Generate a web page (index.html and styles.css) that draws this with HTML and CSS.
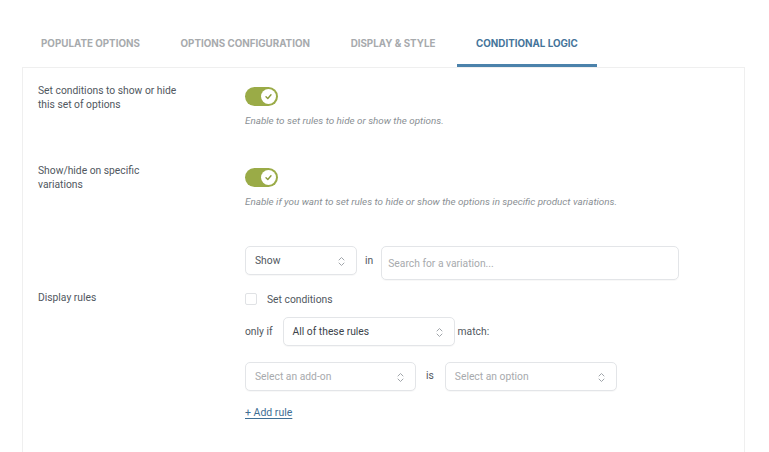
FILE: index.html
```html
<!DOCTYPE html>
<html lang="en">
<head>
<meta charset="utf-8">
<title>Conditional Logic</title>
<link rel="stylesheet" href="styles.css">
</head>
<body>
<nav class="tabs">
  <a class="tab">POPULATE OPTIONS</a>
  <a class="tab">OPTIONS CONFIGURATION</a>
  <a class="tab">DISPLAY &amp; STYLE</a>
  <a class="tab active">CONDITIONAL LOGIC</a>
</nav>
<div class="panel">
  <div class="row row-first">
    <div class="label">Set conditions to show or hide<br>this set of options</div>
    <div class="control">
      <span class="toggle"><span class="knob"><svg width="15" height="15" viewBox="0 0 15 15"><path d="M5 7.8 L6.8 9.5 L10 5.8" fill="none" stroke="#8a9a3c" stroke-width="1.4" stroke-linecap="round" stroke-linejoin="round"/></svg></span></span>
      <p class="desc">Enable to set rules to hide or show the options.</p>
    </div>
  </div>
  <div class="row row-second">
    <div class="label">Show/hide on specific<br>variations</div>
    <div class="control">
      <span class="toggle"><span class="knob"><svg width="15" height="15" viewBox="0 0 15 15"><path d="M5 7.8 L6.8 9.5 L10 5.8" fill="none" stroke="#8a9a3c" stroke-width="1.4" stroke-linecap="round" stroke-linejoin="round"/></svg></span></span>
      <p class="desc">Enable if you want to set rules to hide or show the options in specific product variations.</p>
    </div>
  </div>
  <div class="row row-rules">
    <div class="label label-rules">Display rules</div>
    <div class="control">
      <div class="line line-show">
        <div class="select select-show"><span class="val">Show</span><svg class="chev" width="7" height="11" viewBox="0 0 7 11"><path d="M1 4 L3.5 1.5 L6 4 M1 7 L3.5 9.5 L6 7" fill="none" stroke="#a0a5aa" stroke-width="1" stroke-linecap="round" stroke-linejoin="round"/></svg></div>
        <span class="word word-in">in</span>
        <div class="input"><span class="ph">Search for a variation...</span></div>
      </div>
      <div class="line line-check">
        <span class="checkbox"></span>
        <span class="check-label">Set conditions</span>
      </div>
      <div class="line line-onlyif">
        <span class="word word-only">only if</span>
        <div class="select select-all"><span class="val dark">All of these rules</span><svg class="chev" width="7" height="11" viewBox="0 0 7 11"><path d="M1 4 L3.5 1.5 L6 4 M1 7 L3.5 9.5 L6 7" fill="none" stroke="#a0a5aa" stroke-width="1" stroke-linecap="round" stroke-linejoin="round"/></svg></div>
        <span class="word word-match">match:</span>
      </div>
      <div class="line line-rule">
        <div class="select select-addon"><span class="val ph">Select an add-on</span><svg class="chev" width="7" height="11" viewBox="0 0 7 11"><path d="M1 4 L3.5 1.5 L6 4 M1 7 L3.5 9.5 L6 7" fill="none" stroke="#a0a5aa" stroke-width="1" stroke-linecap="round" stroke-linejoin="round"/></svg></div>
        <span class="word word-is">is</span>
        <div class="select select-option"><span class="val ph">Select an option</span><svg class="chev" width="7" height="11" viewBox="0 0 7 11"><path d="M1 4 L3.5 1.5 L6 4 M1 7 L3.5 9.5 L6 7" fill="none" stroke="#a0a5aa" stroke-width="1" stroke-linecap="round" stroke-linejoin="round"/></svg></div>
      </div>
      <div class="line line-add">
        <a class="add-rule">+ Add rule</a>
      </div>
    </div>
  </div>
</div>
</body>
</html>
```

FILE: styles.css
```css
* { box-sizing: border-box; }
html, body { margin: 0; padding: 0; background: #ffffff; }
body {
  font-family: Roboto, "Noto Sans", "Liberation Sans", sans-serif;
  color: #50575e;
  width: 769px;
  height: 452px;
  overflow: hidden;
}

.tabs {
  display: flex;
  gap: 2.7px;
  padding: 30px 0 0 22px;
  height: 67px;
}
.tab {
  display: block;
  padding: 8px 19px 0;
  height: 37px;
  font-family: Inter, Roboto, sans-serif;
  font-size: 9.8px;
  line-height: 12px;
  font-weight: 700;
  letter-spacing: 0;
  color: #a7aaad;
  position: relative;
}
.tab.active {
  color: #45749a;
}
.tab.active::after {
  content: "";
  position: absolute;
  left: 0;
  right: 0;
  bottom: 0;
  height: 3px;
  background: #4b82ab;
}

.panel {
  margin-left: 22px;
  width: 723px;
  height: 400px;
  border: 1px solid #efefef;
  border-bottom: none;
  padding-left: 15px;
}

.row {
  display: flex;
}
.label {
  width: 207px;
  flex: none;
  font-size: 10.3px;
  line-height: 14px;
  color: #50575e;
}
.control {
  flex: 1;
}
.row-first { height: 81px; padding-top: 16px; }
.row-first .control { padding-top: 3px; }
.row-second { height: 81px; padding-top: 15px; }
.row-second .control { padding-top: 4px; }
.row-rules { padding-top: 16px; }
.label-rules { padding-top: 45px; }

.toggle {
  display: flex;
  justify-content: flex-end;
  align-items: center;
  width: 33px;
  height: 19px;
  border-radius: 10px;
  background: #9aab47;
  padding-right: 2px;
}
.knob {
  display: block;
  width: 15px;
  height: 15px;
  border-radius: 50%;
  background: #ffffff;
}
.knob svg { display: block; }

.desc {
  margin: 8px 0 0;
  font-size: 9.85px;
  line-height: 14px;
  font-style: italic;
  color: #8a8f94;
}

.line {
  display: flex;
  align-items: flex-start;
}
.select {
  display: flex;
  align-items: center;
  justify-content: space-between;
  height: 29px;
  border: 1px solid #e3e5e8;
  border-radius: 5px;
  padding: 1px 11px 0 9px;
  box-shadow: 0 1px 1px rgba(0, 0, 0, 0.03);
  background: #fff;
}
.val {
  font-size: 10.3px;
  line-height: 14px;
  color: #50575e;
}
.val.dark { color: #3c434a; }
.ph { color: #a7aaad; font-size: 10.3px; line-height: 14px; }
.chev { display: block; }

.select-show { width: 112px; }
.word {
  font-size: 10.3px;
  line-height: 30px;
  color: #50575e;
}
.word-in { margin: 0 8px 0 8px; }
.input {
  width: 298px;
  height: 34px;
  border: 1px solid #e3e5e8;
  border-radius: 5px;
  padding: 1px 6px 0;
  display: flex;
  align-items: center;
  box-shadow: 0 1px 1px rgba(0, 0, 0, 0.03);
}

.line-check {
  margin-top: 12px;
  align-items: center;
  height: 14px;
}
.checkbox {
  display: block;
  width: 12px;
  height: 12px;
  border: 1px solid #e0e2e5;
  border-radius: 2px;
  background: #fff;
}
.check-label {
  margin-left: 10px;
  font-size: 10.3px;
  line-height: 14px;
  padding-top: 1px;
  color: #50575e;
}

.line-onlyif { margin-top: 11px; }
.word-only { margin-right: 10px; }
.select-all { width: 172px; }
.word-match { margin-left: 3px; }

.line-rule { margin-top: 15px; }
.select-addon { width: 171px; }
.word-is { margin: 0 11px 0 10px; line-height: 28px; }
.select-option { width: 172px; }

.line-add { margin-top: 15px; }
.add-rule {
  font-size: 10.5px;
  line-height: 14px;
  color: #3f6f95;
  text-decoration: underline;
  text-underline-offset: 2px;
}
```
